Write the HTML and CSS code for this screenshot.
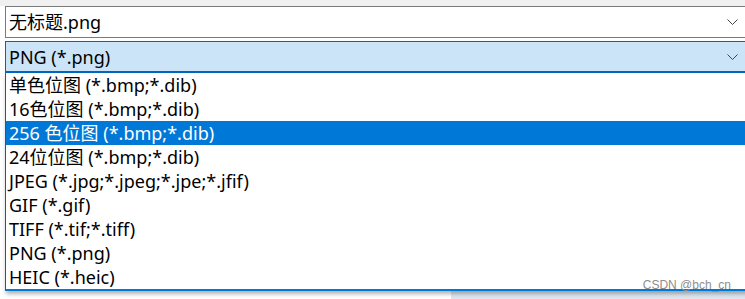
FILE: index.html
```html
<!DOCTYPE html>
<html lang="zh-CN">
<head>
<meta charset="UTF-8">
<meta name="viewport" content="width=device-width, initial-scale=1.0">
<title>保存类型</title>
<link rel="stylesheet" href="styles.css">
</head>
<body>

<div class="top-strip"></div>

<div class="panel">
  <!-- File name box -->
  <div class="combo">
    <span class="combo-text">无标题.png</span>
    <svg class="chevron" width="11" height="6" viewBox="0 0 11 6"><polyline points="0.5,0.5 5.5,5.5 10.5,0.5" fill="none" stroke="#444" stroke-width="1"/></svg>
  </div>

  <!-- File type box, opened -->
  <div class="combo combo-open">
    <span class="combo-text">PNG (*.png)</span>
    <svg class="chevron" width="11" height="6" viewBox="0 0 11 6"><polyline points="0.5,0.5 5.5,5.5 10.5,0.5" fill="none" stroke="#444" stroke-width="1"/></svg>
  </div>

  <ul class="dropdown">
    <li>单色位图 (*.bmp;*.dib)</li>
    <li>16色位图 (*.bmp;*.dib)</li>
    <li class="selected">256 色位图 (*.bmp;*.dib)</li>
    <li>24位位图 (*.bmp;*.dib)</li>
    <li>JPEG (*.jpg;*.jpeg;*.jpe;*.jfif)</li>
    <li>GIF (*.gif)</li>
    <li>TIFF (*.tif;*.tiff)</li>
    <li>PNG (*.png)</li>
    <li>HEIC (*.heic)</li>
  </ul>

  <div class="below">
    <div class="below-block"></div>
  </div>
</div>

<div class="watermark">CSDN @bch_cn</div>

</body>
</html>
```

FILE: styles.css
```css
/* General */
html, body {
  margin: 0;
  height: 100%;
  overflow: hidden;
}

body {
  background-color: #fff;
  font-family: "Noto Sans", "Noto Sans CJK SC", sans-serif;
  color: #000;
  position: relative;
}

.top-strip {
  height: 6px;
  background-color: #f0f0f0;
}

.panel {
  padding-left: 5px;
  margin-right: -3px; /* boxes run past the right edge */
}

/* Combo boxes */
.combo {
  display: flex;
  align-items: center;
  justify-content: space-between;
  height: 30px;
  border: 1px solid #7a7a7a;
  background-color: #fff;
  padding: 0 9px 0 3px;
}

.combo-text {
  font-size: 18px;
  line-height: 1;
}

.chevron {
  display: block;
}

.combo-open {
  margin-top: 3px;
  height: 29px;
  border: 1px solid #0067c0;
  border-bottom: 2px solid #0067c0;
  background-color: #cce4f7;
}

/* Dropdown list */
.dropdown {
  list-style: none;
  margin: 0;
  padding: 0;
  border-left: 1px solid #0a5fb4;
  border-bottom: 2px solid #0078d7;
  background-color: #fff;
  position: relative;
  z-index: 1;
  box-shadow: 1px 3px 4px rgba(0, 0, 0, 0.3);
}

.dropdown li {
  height: 24px;
  line-height: 24px;
  padding-left: 3px;
  font-size: 18px;
  white-space: nowrap;
}

.dropdown li.selected {
  background-color: #0078d7;
  color: #fff;
}

/* Whatever sits below the list */
.below {
  height: 12px;
  display: flex;
}

.below-block {
  margin-left: 446px;
  flex: 1;
  background-color: #dee7f1;
}

.watermark {
  position: absolute;
  top: 278px;
  right: 14px;
  z-index: 2;
  font-family: "Liberation Sans", Arial, sans-serif;
  font-size: 12px;
  color: #8e8e8e;
}
```
